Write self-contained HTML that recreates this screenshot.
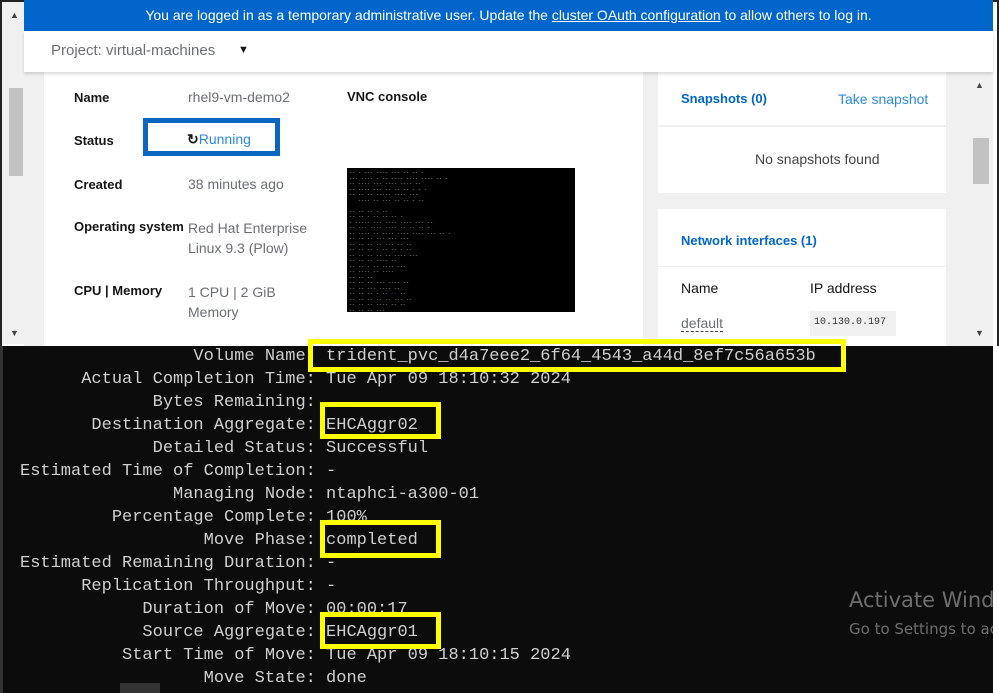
<!DOCTYPE html>
<html><head><meta charset="utf-8"><style>
*{margin:0;padding:0;box-sizing:border-box}
body{width:999px;height:693px;overflow:hidden;background:#fff;position:relative;font-family:"Liberation Sans",sans-serif}
.a{position:absolute}
.t{font-family:"Liberation Mono",monospace;font-size:17px;color:#cfcfcf;white-space:pre;line-height:23px}
.yb{position:absolute;border:5px solid #ffff00}
.lbl{font-size:13px;color:#151515;font-weight:bold}
.val{font-size:14px;color:#6a6e73}
</style></head><body>
<div class="a" style="left:0;top:0;width:999px;height:346px;background:#fff;border:2px solid #222;border-bottom:none"></div>
<div class="a" style="left:2px;top:2px;width:22px;height:342px;background:#f0f0f0"></div>
<div class="a" style="left:9px;top:88px;width:14px;height:88px;background:#c2c2c2"></div>
<div class="a" style="left:10px;top:10px;font-size:9px;color:#444">▲</div>
<div class="a" style="left:10px;top:328px;font-size:9px;color:#444">▼</div>
<div class="a" style="left:24px;top:0;width:969px;height:31px;background:#0066cc;color:#fff;font-size:14px;line-height:31px;text-align:center">You are logged in as a temporary administrative user. Update the <u>cluster OAuth configuration</u> to allow others to log in.</div>
<div class="a" style="left:24px;top:31px;width:969px;height:41px;background:#fff;box-shadow:0 2px 3px rgba(0,0,0,.15);z-index:2"></div>
<div class="a" style="left:51px;top:42px;font-size:15px;color:#6a6e73;z-index:3">Project: virtual-machines</div>
<div class="a" style="left:238px;top:44px;font-size:11px;color:#151515;z-index:3">▼</div>
<div class="a" style="left:24px;top:72px;width:946px;height:274px;background:#f0f0f0"></div>
<div class="a" style="left:44px;top:72px;width:599px;height:274px;background:#fff"></div>
<div class="a lbl" style="left:74px;top:90px">Name</div>
<div class="a val" style="left:188px;top:89px">rhel9-vm-demo2</div>
<div class="a lbl" style="left:347px;top:89px">VNC console</div>
<div class="a lbl" style="left:74px;top:133px">Status</div>
<div class="a" style="left:143px;top:118px;width:137px;height:38px;border:5px solid #0b66c2"></div>
<div class="a" style="left:187px;top:131px;font-size:14px;color:#2b8ae0"><b style="color:#151515">↻</b>Running</div>
<div class="a lbl" style="left:74px;top:177px">Created</div>
<div class="a val" style="left:188px;top:176px">38 minutes ago</div>
<div class="a lbl" style="left:74px;top:219px">Operating system</div>
<div class="a val" style="left:188px;top:218px;line-height:20px">Red Hat Enterprise<br>Linux 9.3 (Plow)</div>
<div class="a lbl" style="left:74px;top:283px">CPU | Memory</div>
<div class="a val" style="left:188px;top:282px;line-height:20px">1 CPU | 2 GiB<br>Memory</div>
<div class="a" style="left:347px;top:168px;width:228px;height:144px;background:#000;overflow:hidden;padding:3px 2px;font-family:'Liberation Mono',monospace;font-size:5px;line-height:5.5px;color:#bbb;white-space:pre">-- - --- ---- --- -- -- -
--- ---- - -- ---- ---- ---- -- -
-- ---- --- ---- ---- --
-- ---- --- -- -- -- - - -
-- -- -- ----- ---- ---
   ---- -- --- -- -- - --

-- -- -- - --
-- -- - -- -- -- -
- ----- --- ---- ---- --- --
-- --- ---- ---- -- -- -- -
-- ---- -- ---- ---- ---- --- -- -
-- -- -- --- --- ---
-- -- -- -- --- -- --
-- -- -- - -- -- - --
-- -- -- -- -- ---- ---
-- -- -- ---- --
-- -- - -- ---- ---
-- ---- -- ----
-- -- --
-- -- -- --- ---- --
-- -- --- ---- --
-- -- -- - -- <span style="color:#44f">--</span> --
-- -- -- -- -- --- --
-- -- -- ---- -- --
-- -- -- ---
-- -- -- --- -- --
<span style="color:#44f">-</span> -- -- --- --
-- -- -- ---- -- --
-- -- -- ---
-- -- -- --
-- -- ----</div>
<div class="a" style="left:658px;top:72px;width:288px;height:53px;background:#fff"></div>
<div class="a" style="left:681px;top:91px;font-size:13px;color:#0066cc;font-weight:bold">Snapshots (0)</div>
<div class="a" style="left:838px;top:91px;font-size:14px;color:#2b8ae0">Take snapshot</div>
<div class="a" style="left:658px;top:127px;width:288px;height:66px;background:#fff"></div>
<div class="a" style="left:755px;top:151px;font-size:14px;color:#444">No snapshots found</div>
<div class="a" style="left:658px;top:209px;width:288px;height:57px;background:#fff"></div>
<div class="a" style="left:681px;top:233px;font-size:13px;color:#0066cc;font-weight:bold">Network interfaces (1)</div>
<div class="a" style="left:658px;top:267px;width:288px;height:79px;background:#fff"></div>
<div class="a" style="left:681px;top:280px;font-size:14px;color:#151515">Name</div>
<div class="a" style="left:810px;top:280px;font-size:14px;color:#151515">IP address</div>
<div class="a" style="left:681px;top:315px;font-size:14px;color:#6a6e73;border-bottom:1px dashed #444;line-height:16px">default</div>
<div class="a" style="left:810px;top:311px;width:86px;height:25px;background:#f0f0f0;font-family:'Liberation Mono',monospace;font-size:10px;color:#333;padding:6px 4px">10.130.0.197</div>
<div class="a" style="left:970px;top:72px;width:23px;height:274px;background:#f0f0f0"></div>
<div class="a" style="left:973px;top:138px;width:16px;height:46px;background:#c2c2c2"></div>
<div class="a" style="left:975px;top:80px;font-size:9px;color:#444">▲</div>
<div class="a" style="left:975px;top:328px;font-size:9px;color:#444">▼</div>
<div class="a" style="left:0;top:346px;width:993px;height:347px;background:#0c0c0c;border-left:3px solid #333"></div>
<div class="a" style="left:993px;top:346px;width:6px;height:347px;background:#fff"></div>
<div class="a" style="left:120px;top:683px;width:40px;height:10px;background:#333"></div>
<div class="a t" style="left:20px;top:345px">                 Volume Name: trident_pvc_d4a7eee2_6f64_4543_a44d_8ef7c56a653b
      Actual Completion Time: Tue Apr 09 18:10:32 2024
             Bytes Remaining:
       Destination Aggregate: EHCAggr02
             Detailed Status: Successful
Estimated Time of Completion: -
               Managing Node: ntaphci-a300-01
         Percentage Complete: 100%
                  Move Phase: completed
Estimated Remaining Duration: -
      Replication Throughput: -
            Duration of Move: 00:00:17
            Source Aggregate: EHCAggr01
          Start Time of Move: Tue Apr 09 18:10:15 2024
                  Move State: done</div>
<div class="yb" style="left:308px;top:339px;width:538px;height:33px"></div>
<div class="yb" style="left:320px;top:402px;width:121px;height:37px"></div>
<div class="yb" style="left:320px;top:520px;width:121px;height:38px"></div>
<div class="yb" style="left:320px;top:612px;width:121px;height:37px"></div>
<div class="a" style="left:849px;top:588px;font-family:'DejaVu Sans',sans-serif;font-size:21px;color:#6e6e6e;white-space:nowrap;width:144px;overflow:hidden">Activate Windows</div>
<div class="a" style="left:849px;top:620px;font-family:'DejaVu Sans',sans-serif;font-size:15px;color:#6e6e6e;white-space:nowrap;width:144px;overflow:hidden">Go to Settings to activate</div>
</body></html>
